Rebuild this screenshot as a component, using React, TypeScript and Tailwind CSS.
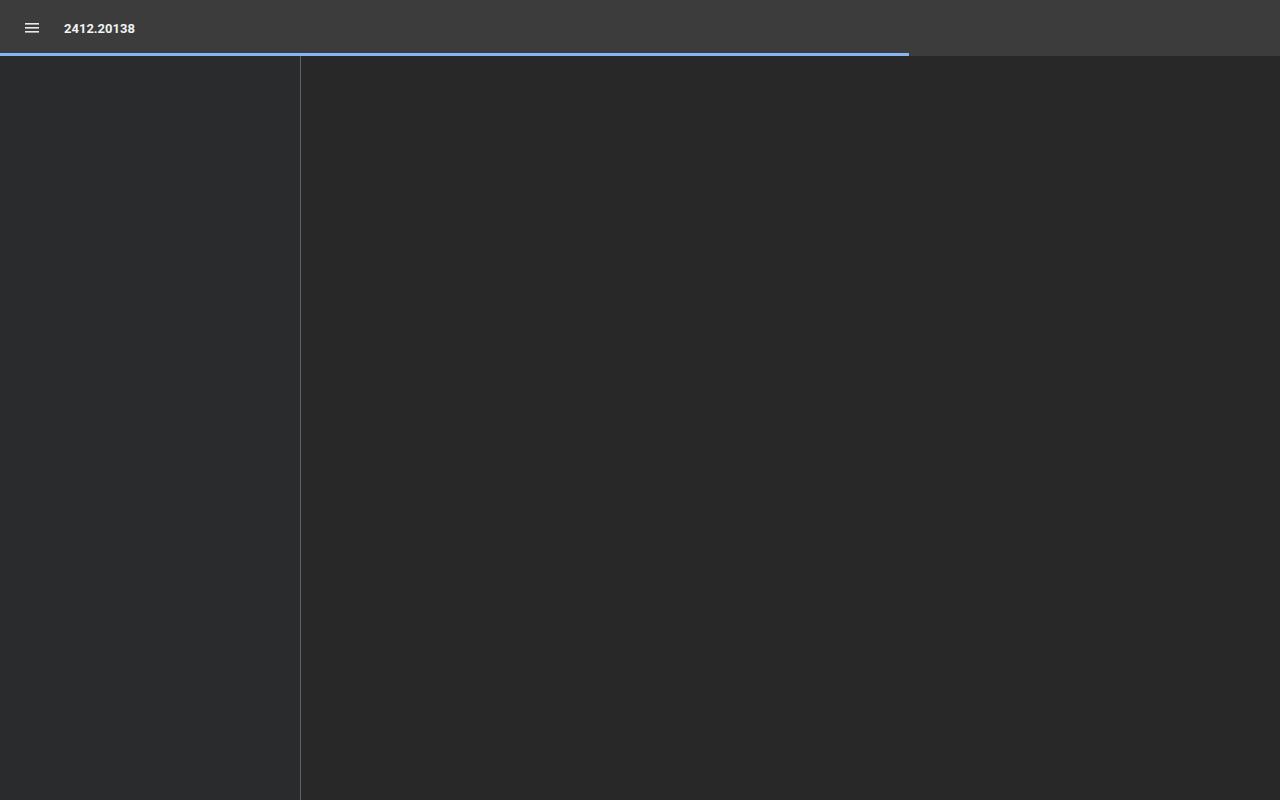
import React from "react";

const MenuIcon: React.FC = () => (
  <svg width="14" height="10" viewBox="0 0 14 10" className="block">
    <rect x="0" y="0" width="14" height="1.6" fill="#e8eaed" />
    <rect x="0" y="4" width="14" height="1.6" fill="#e8eaed" />
    <rect x="0" y="8" width="14" height="1.6" fill="#e8eaed" />
  </svg>
);

const App: React.FC = () => {
  const progress = 909;

  return (
    <div className="flex h-[800px] w-[1280px] flex-col overflow-hidden bg-[#282828] font-['Roboto',_sans-serif]">
      {/* Toolbar */}
      <div className="relative flex h-14 shrink-0 items-center bg-[#3c3c3c]">
        <button className="ml-[25px] flex h-[10px] w-[14px] items-center justify-center">
          <MenuIcon />
        </button>
        <span className="ml-[25px] mt-[2px] text-[13px] font-bold text-[#f1f3f4]">
          2412.20138
        </span>
        {/* Loading bar */}
        <div
          className="absolute bottom-0 left-0 h-[3px] bg-[#8ab4f8]"
          style={{ width: progress }}
        />
      </div>

      {/* Body */}
      <div className="flex min-h-0 flex-1">
        <aside className="w-[301px] shrink-0 border-r border-[#5f6368] bg-[#2a2b2d]" />
        <main className="flex-1 bg-[#282828]" />
      </div>
    </div>
  );
};

export default App;
